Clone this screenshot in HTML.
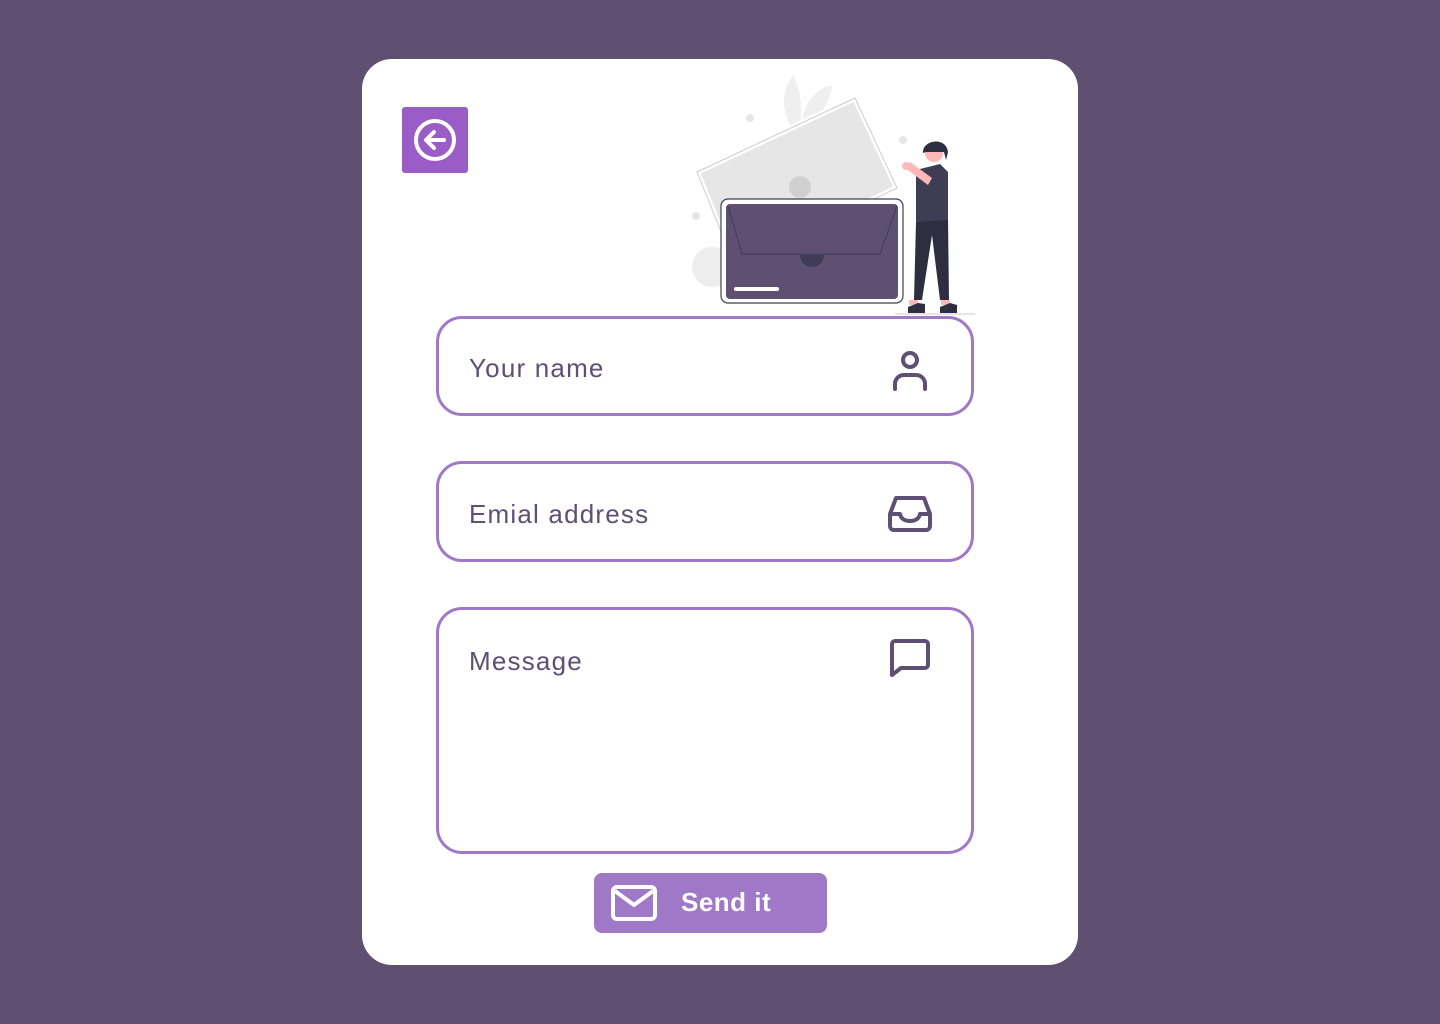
<!DOCTYPE html>
<html><head><meta charset="utf-8"><style>
*{margin:0;padding:0;box-sizing:border-box}
body{width:1440px;height:1024px;background:#5f4f70;position:relative;overflow:hidden;font-family:"Liberation Sans",sans-serif}
.card{position:absolute;left:362px;top:59px;width:716px;height:906px;background:#fff;border-radius:30px}
.back{position:absolute;left:402px;top:107px;width:66px;height:66px;background:#9a5cc6;border-radius:3px}
.field{position:absolute;left:436px;width:538px;border:3px solid #a078c8;border-radius:26px}
.field span{position:absolute;left:30px;font-size:26px;color:#5f4f75;letter-spacing:1.2px}
.btn{position:absolute;left:594px;top:873px;width:233px;height:60px;background:#a078c8;border-radius:8px}
.btn span{position:absolute;left:87px;top:14px;font-size:26px;font-weight:bold;color:#fff;letter-spacing:.5px}
svg.abs{position:absolute;left:0;top:0}
</style></head><body>
<div class="card"></div>
<div class="back"><svg width="66" height="66" viewBox="0 0 66 66"><circle cx="33" cy="33" r="19" fill="none" stroke="#fff" stroke-width="4"/><path d="M42 33H25M32 25l-8 8 8 8" fill="none" stroke="#fff" stroke-width="4" stroke-linecap="round" stroke-linejoin="round"/></svg></div>

<svg class="abs" width="1440" height="1024">
<circle cx="712" cy="267" r="20" fill="#ededed"/>
<circle cx="750" cy="118" r="4" fill="#e6e6e6"/>
<circle cx="903" cy="140" r="4" fill="#e6e6e6"/>
<circle cx="696" cy="216" r="4" fill="#e6e6e6"/>
<path d="M793 75c-15 20-10 45 5 60 5-20 5-40-5-60z" fill="#efefef"/>
<path d="M832 85c-20 5-32 25-30 45 15-8 28-25 30-45z" fill="#efefef"/>
<path d="M697 172 L855 98 L897 188 L735 266 Z" fill="#e6e6e6" stroke="#fff" stroke-width="6" stroke-linejoin="round"/>
<path d="M697 172 L855 98 L897 188 L735 266 Z" fill="none" stroke="#ccc" stroke-width="1" stroke-linejoin="round"/>
<circle cx="800" cy="187" r="11" fill="#d0d0d0"/>
<rect x="721" y="199" width="182" height="104" rx="7" fill="#fff" stroke="#3f3d56" stroke-width="1.2"/>
<rect x="726" y="204" width="172" height="95" rx="4" fill="#5f4f70"/>
<path d="M728 206 L742 254 L880 254 L897 206" fill="none" stroke="#3f3d56" stroke-width="1"/>
<path d="M800 255 a12 12 0 0 0 24 0 z" fill="#3f3d56"/>
<rect x="734" y="287" width="45" height="4" rx="2" fill="#fff"/>
<line x1="895" y1="314" x2="975" y2="314" stroke="#ccc" stroke-width="1"/>
<path d="M916 222 L914 300 L922 300 L932 235 L940 300 L949 300 L948 218 Z" fill="#2f2e41"/>
<rect x="909" y="300" width="9" height="5" fill="#ffb8b8"/><rect x="941" y="300" width="9" height="5" fill="#ffb8b8"/>
<path d="M908 313 L908 307 L918 303 L925 304 L925 313 Z M940 313 L940 307 L950 303 L957 305 L957 313 Z" fill="#2f2e41"/>
<path d="M916 170 L940 164 L948 172 L948 220 L916 222 Z" fill="#3f3d56"/>
<path d="M905 168 L928 185 L932 178 L910 162 Z" fill="#ffb8b8"/>
<circle cx="906" cy="166" r="4" fill="#ffb8b8"/>
<circle cx="934" cy="153" r="9" fill="#ffb8b8"/>
<path d="M923 153 C922 140 946 136 948 152 L946 160 L944 152 L926 152 Z" fill="#2f2e41"/>
</svg>

<div class="field" style="top:316px;height:100px"><span style="top:34px">Your name</span>
<svg style="position:absolute;left:451px;top:31px" width="40" height="42" viewBox="0 0 40 42"><circle cx="20" cy="10" r="7" fill="none" stroke="#5f4f75" stroke-width="4"/><path d="M5 39v-5a9 9 0 0 1 9-9h12a9 9 0 0 1 9 9v5" fill="none" stroke="#5f4f75" stroke-width="4" stroke-linecap="round"/></svg></div>
<div class="field" style="top:461px;height:101px"><span style="top:35px">Emial address</span>
<svg style="position:absolute;left:447px;top:28px" width="48" height="42" viewBox="0 0 48 42"><path d="M4 22 L10 6 H38 L44 22 V34 a4 4 0 0 1-4 4 H8 a4 4 0 0 1-4-4 Z" fill="none" stroke="#5f4f75" stroke-width="4" stroke-linejoin="round"/><path d="M4 22h10c1 5 5 7 10 7s9-2 10-7h10" fill="none" stroke="#5f4f75" stroke-width="4" stroke-linejoin="round"/></svg></div>
<div class="field" style="top:607px;height:247px"><span style="top:36px">Message</span>
<svg style="position:absolute;left:449px;top:27px" width="44" height="44" viewBox="0 0 44 44"><path d="M4 38 V7 a3 3 0 0 1 3-3 H37 a3 3 0 0 1 3 3 V28 a3 3 0 0 1-3 3 H13 Z" fill="none" stroke="#5f4f75" stroke-width="4" stroke-linejoin="round"/></svg></div>

<div class="btn"><svg style="position:absolute;left:17px;top:12px" width="46" height="36" viewBox="0 0 46 36"><rect x="2" y="2" width="42" height="32" rx="4" fill="none" stroke="#fff" stroke-width="4"/><path d="M4 6 L23 20 L42 6" fill="none" stroke="#fff" stroke-width="4" stroke-linejoin="round"/></svg><span>Send it</span></div>
</body></html>
